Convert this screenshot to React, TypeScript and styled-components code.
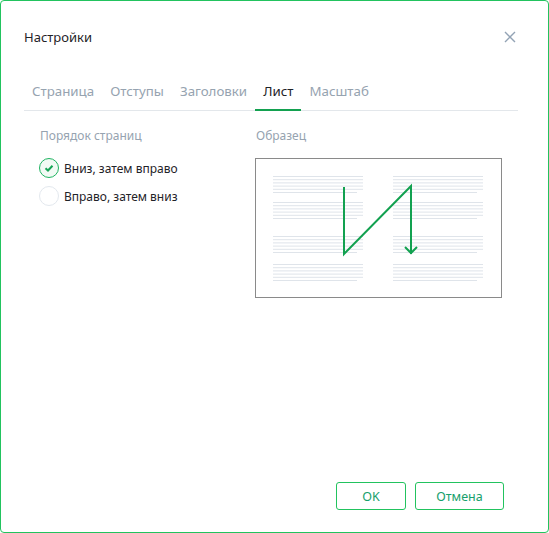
import { createGlobalStyle } from "styled-components";
import styled from "styled-components";

const GlobalStyle = createGlobalStyle`
  html, body {
    margin: 0;
    padding: 0;
    background: #ffffff;
  }
  body {
    font-family: "Noto Sans", "Open Sans", sans-serif;
  }
`;

const tabs = ["Страница", "Отступы", "Заголовки", "Лист", "Масштаб"];

const Dialog = styled.div`
  width: 549px;
  height: 533px;
  box-sizing: border-box;
  border: 1px solid #22c35e;
  border-radius: 4px;
  display: flex;
  flex-direction: column;
  padding: 0 23px 22px 23px;
`;

const Header = styled.div`
  height: 74px;
  display: flex;
  align-items: center;
  justify-content: space-between;
`;

const Title = styled.div`
  font-size: 13px;
  color: #1f2328;
  margin-top: -2px;
`;

const Close = styled.button`
  border: none;
  background: none;
  padding: 0;
  width: 14px;
  height: 14px;
  margin-right: 8px;
  margin-top: -2px;
  display: flex;
  cursor: pointer;
`;

const TabBar = styled.div`
  display: flex;
  border-bottom: 1px solid #e3e7eb;
  width: 494px;
  height: 36px;
  box-sizing: border-box;
`;

const Tab = styled.div<{ $active?: boolean }>`
  padding: 0 8px;
  font-size: 13.3px;
  line-height: 32px;
  color: ${(p) => (p.$active ? "#1f2328" : "#96a3b0")};
  border-bottom: 2px solid ${(p) => (p.$active ? "#13a150" : "transparent")};
  margin-bottom: -1px;
  box-sizing: border-box;
  height: 36px;
`;

const Body = styled.div`
  flex: 1;
  display: flex;
  padding: 16px 0 0 16px;
`;

const LeftCol = styled.div`
  width: 216px;
  display: flex;
  flex-direction: column;
`;

const RightCol = styled.div`
  display: flex;
  flex-direction: column;
`;

const SectionLabel = styled.div`
  font-size: 12px;
  color: #96a3b0;
  line-height: 18px;
  margin-bottom: 9px;
`;

const RadioRow = styled.label`
  display: flex;
  align-items: center;
  gap: 5px;
  height: 28px;
  font-size: 12px;
  color: #1f2328;
  margin-left: -1px;
`;

const RadioCircle = styled.span<{ $checked?: boolean }>`
  width: 20px;
  height: 20px;
  box-sizing: border-box;
  border-radius: 50%;
  border: 1.5px solid ${(p) => (p.$checked ? "#1fb461" : "#e3e8ee")};
  background: ${(p) => (p.$checked ? "#f1faf4" : "#ffffff")};
  display: flex;
  align-items: center;
  justify-content: center;
`;

const Preview = styled.div`
  width: 247px;
  height: 140px;
  box-sizing: border-box;
  border: 1px solid #8a8a8a;
  margin-left: -1px;
  margin-top: 4px;
`;

const Footer = styled.div`
  display: flex;
  justify-content: flex-end;
  gap: 9px;
  padding-right: 21px;
`;

const Button = styled.button<{ $w: number }>`
  width: ${(p) => p.$w}px;
  height: 28px;
  border: 1px solid #22c35e;
  border-radius: 3px;
  background: #ffffff;
  color: #17a06c;
  font-family: "Noto Sans", "Open Sans", sans-serif;
  font-size: 12.5px;
  cursor: pointer;
`;

const groupsY = [176, 202, 236, 264];

function TextBlock({ x, y }: { x: number; y: number }) {
  const rows = [0, 3.2, 6.4, 9.6, 12.8];
  return (
    <g stroke="#dfe4ea" strokeWidth="1">
      {rows.map((r) => (
        <line key={r} x1={x} x2={x + 90} y1={y + r + 0.5} y2={y + r + 0.5} />
      ))}
      <line x1={x} x2={x + 84} y1={y + 16.5} y2={y + 16.5} />
    </g>
  );
}

function Sample() {
  // drawn in page coordinates; the preview box sits at (255,158)
  const ox = 255;
  const oy = 158;
  return (
    <svg width="245" height="138" viewBox={`${ox + 1} ${oy + 1} 245 138`}>
      {groupsY.map((y) => (
        <g key={y}>
          <TextBlock x={273} y={y} />
          <TextBlock x={393} y={y} />
        </g>
      ))}
      <polyline
        points="344,187 344,254 411,186 411,254"
        fill="none"
        stroke="#12a150"
        strokeWidth="2"
      />
      <polyline
        points="405,247 411,253 417,247"
        fill="none"
        stroke="#12a150"
        strokeWidth="2"
      />
    </svg>
  );
}

export default function App() {
  return (
    <>
      <GlobalStyle />
      <Dialog>
        <Header>
          <Title>Настройки</Title>
          <Close aria-label="close">
            <svg width="14" height="14" viewBox="0 0 14 14">
              <path d="M2 2 L12 12 M12 2 L2 12" stroke="#93a3b5" strokeWidth="1.4" />
            </svg>
          </Close>
        </Header>
        <TabBar>
          {tabs.map((t) => (
            <Tab key={t} $active={t === "Лист"}>
              {t}
            </Tab>
          ))}
        </TabBar>
        <Body>
          <LeftCol>
            <SectionLabel>Порядок страниц</SectionLabel>
            <RadioRow>
              <RadioCircle $checked>
                <svg width="10" height="10" viewBox="0 0 10 10">
                  <path d="M1.5 5.2 L4 7.5 L8.5 2.8" fill="none" stroke="#16a456" strokeWidth="2" />
                </svg>
              </RadioCircle>
              Вниз, затем вправо
            </RadioRow>
            <RadioRow>
              <RadioCircle />
              Вправо, затем вниз
            </RadioRow>
          </LeftCol>
          <RightCol>
            <SectionLabel>Образец</SectionLabel>
            <Preview>
              <Sample />
            </Preview>
          </RightCol>
        </Body>
        <Footer>
          <Button $w={70}>OK</Button>
          <Button $w={89}>Отмена</Button>
        </Footer>
      </Dialog>
    </>
  );
}
